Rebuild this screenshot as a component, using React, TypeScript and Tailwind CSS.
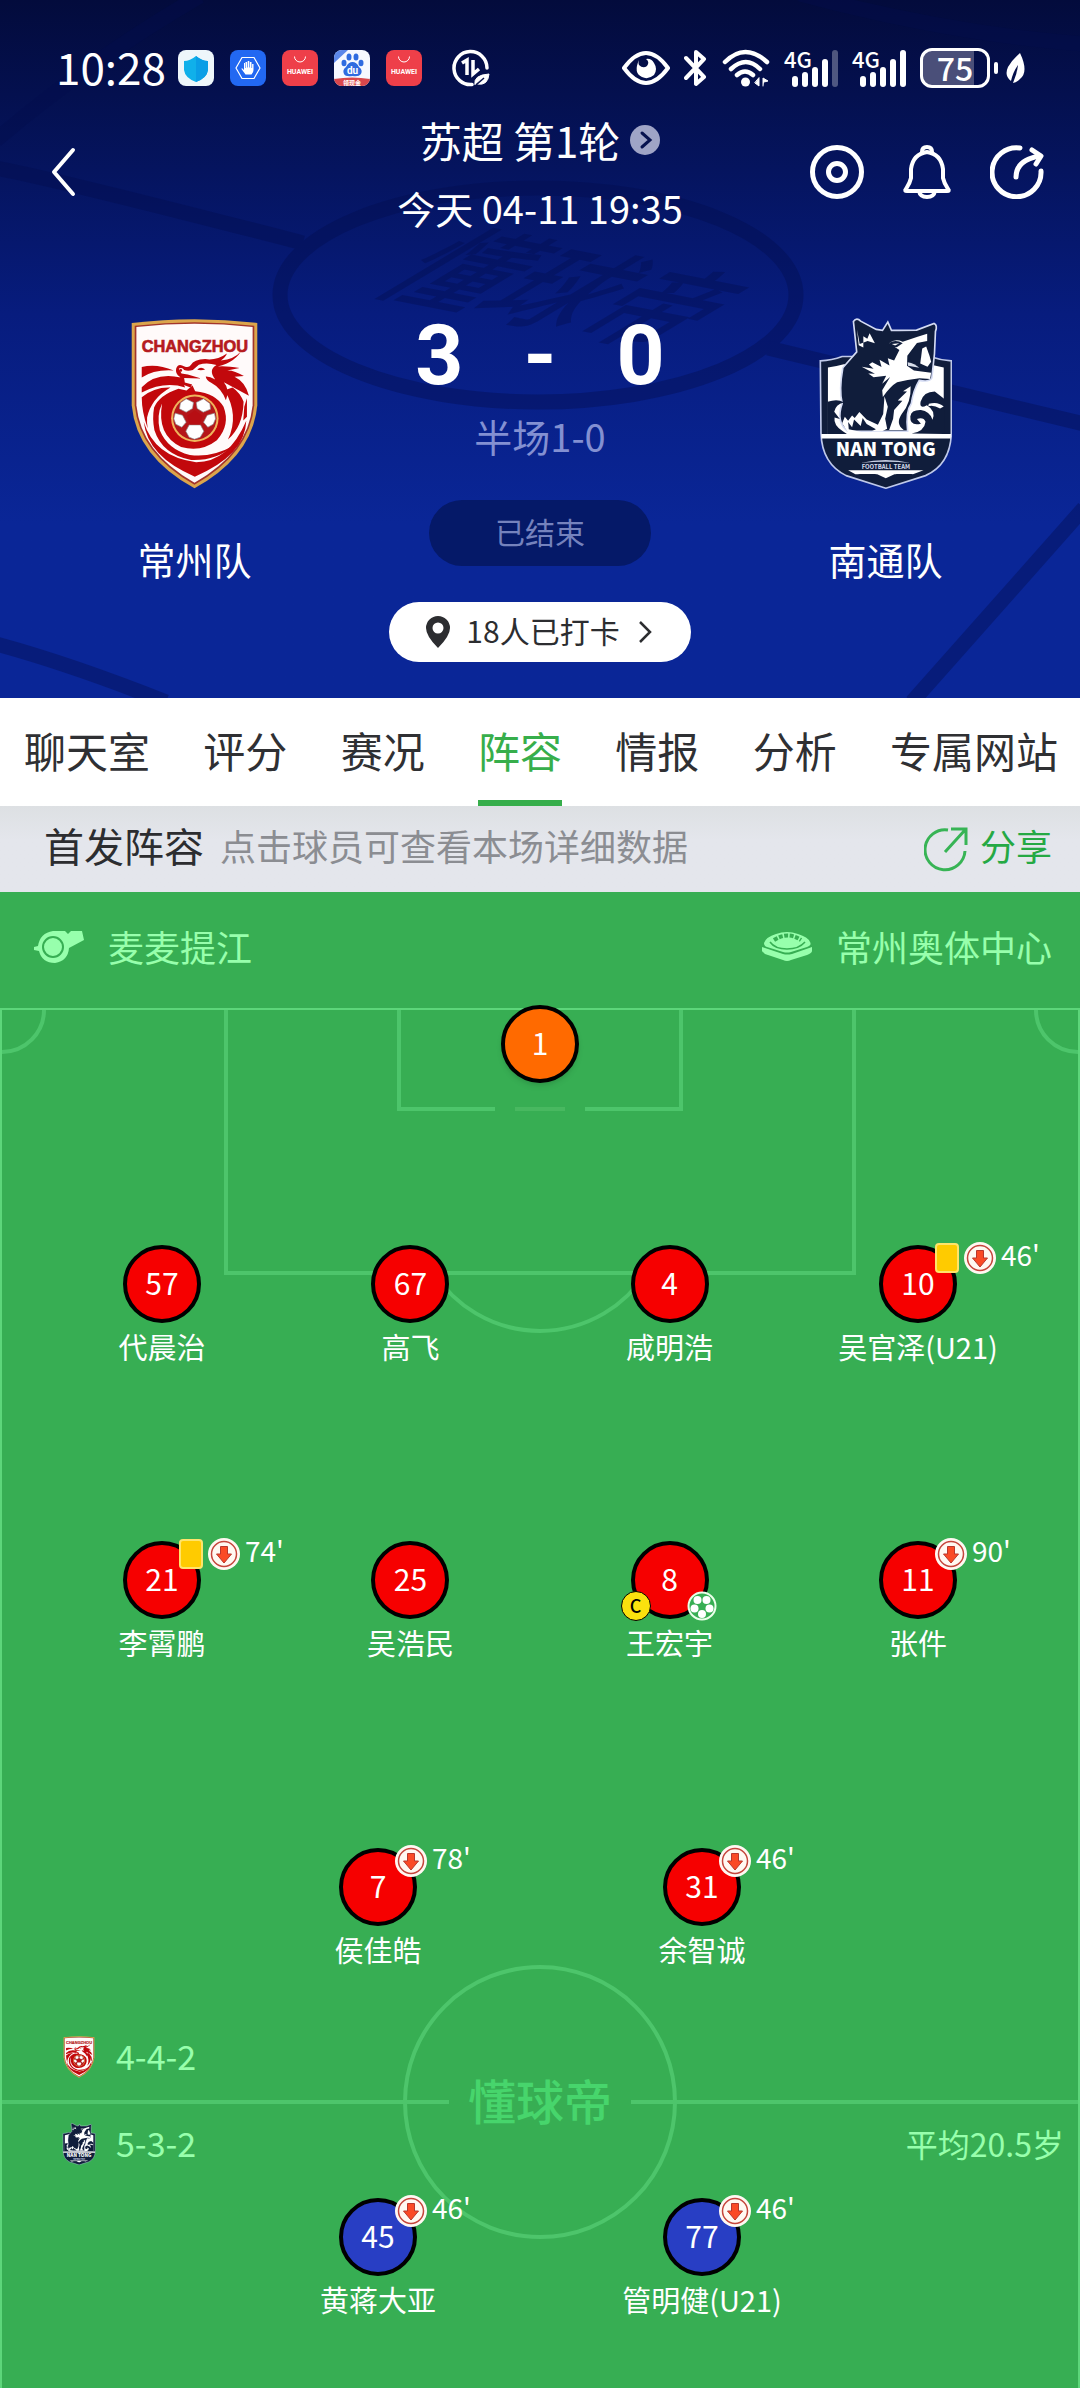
import { clsx } from "clsx";

interface ICrest {
  className?: string;
}

interface IPlayer {
  number: number;
  name?: string;
  team: "keeper" | "home" | "away";
  off?: string;
  booked?: boolean;
  captain?: boolean;
  scored?: boolean;
}

const tabs = ["聊天室", "评分", "赛况", "阵容", "情报", "分析", "专属网站"];

const keeper: IPlayer[] = [{ number: 1, team: "keeper" }];

const defenders: IPlayer[] = [
  { number: 57, name: "代晨治", team: "home" },
  { number: 67, name: "高飞", team: "home" },
  { number: 4, name: "咸明浩", team: "home" },
  { number: 10, name: "吴官泽(U21)", team: "home", booked: true, off: "46'" },
];

const midfielders: IPlayer[] = [
  { number: 21, name: "李霄鹏", team: "home", booked: true, off: "74'" },
  { number: 25, name: "吴浩民", team: "home" },
  { number: 8, name: "王宏宇", team: "home", captain: true, scored: true },
  { number: 11, name: "张件", team: "home", off: "90'" },
];

const forwards: IPlayer[] = [
  { number: 7, name: "侯佳皓", team: "home", off: "78'" },
  { number: 31, name: "余智诚", team: "home", off: "46'" },
];

const awayForwards: IPlayer[] = [
  { number: 45, name: "黄蒋大亚", team: "away", off: "46'" },
  { number: 77, name: "管明健(U21)", team: "away", off: "46'" },
];

const ChangzhouCrest = ({ className }: ICrest) => (
  <svg viewBox="120 84 380 512" className={className} role="img" aria-label="常州队">
    <path d="M122 99Q310 76 498 99V345Q484 498 310 594Q136 498 122 345Z" fill="#dba54c" />
    <path d="M131 107Q310 86 489 107V345Q475 490 310 583Q145 490 131 345Z" fill="#a3342b" />
    <path d="M136 111Q310 91 484 111V345Q470 486 310 577Q150 486 136 345Z" fill="#fffafa" />
    <text
      x="311"
      y="186"
      textAnchor="middle"
      fontSize="49"
      fontWeight="700"
      fontFamily="'Liberation Sans', sans-serif"
      fill="#b51b20"
      stroke="#b51b20"
      strokeWidth="2"
    >
      CHANGZHOU
    </text>
    <g fill="#c2080c">
      <path d="M152 231Q195 219 248 241Q190 237 152 262Z" />
      <path d="M152 291Q195 245 269 262L282 292Q220 272 152 307Z" />
      <path d="M152 321Q190 290 238 292Q180 325 168 382Q167 400 170 415Q152 365 152 321Z" />
      <path d="M189 352Q205 315 262 296L286 301L304 286L312 303Q375 310 397 350Q418 405 377 450Q330 487 270 470Q196 435 213 340Q196 375 206 420Q230 478 296 494Q360 503 424 468Q375 512 300 509Q214 493 190 420Q183 385 189 352Z" />
      <path d="M158 395Q190 500 315 516Q412 516 465 392Q462 495 311 559Q170 500 158 395Z" />
      <path d="M400 300Q445 375 410 448Q455 410 457 335Q447 308 424 292Z" />
      <path d="M459 350L467 324L467 380L456 391Z" />
      <path d="M360 278Q390 294 404 330Q417 299 398 276L473 317Q463 276 430 260L458 258Q429 240 408 241L445 234Q390 224 365 232Q425 222 449 184Q429 207 389 211Q404 200 407 190Q376 212 342 207Q308 208 299 225Q293 234 280 229Q260 217 255 236Q252 252 266 260L276 284L298 292L303 283L281 277L279 264L326 265L330 257L305 255Q330 246 335 226L351 231Q331 264 360 278Z" />
    </g>
    <path d="M263 235Q274 230 279 240Q290 244 305 240L323 224Q347 216 376 225Q350 240 372 268Q344 252 330 265L290 253L271 250Z" fill="#fffafa" />
    <path d="M318 239Q328 228 342 238Q331 242 318 239Z" fill="#c2080c" />
    <circle cx="269" cy="241" r="4" fill="#c2080c" />
    <circle cx="311" cy="384" r="71" fill="#efb45c" />
    <circle cx="311" cy="384" r="65" fill="#b5161a" />
    <g fill="#fff" stroke="#8e8b8b" strokeWidth="2">
      <path d="M285 326L307 337L304 355L285 366L265 356L268 338Z" />
      <path d="M337 326L356 340L358 357L336 366L318 355L315 337Z" />
      <path d="M252 369L274 375L285 396L272 411L254 402L248 386Z" />
      <path d="M370 369L348 375L337 396L350 411L366 402L373 386Z" />
      <path d="M294 404H328L338 423L327 441L310 447L294 441L284 423Z" />
    </g>
    <path d="M311 360L334 377L326 403H296L288 377Z" fill="#b70e13" />
  </svg>
);

const NantongCrest = ({ className }: ICrest) => (
  <svg viewBox="118 82 402 516" className={className} role="img" aria-label="南通队">
    <path d="M122 211Q157 210 188 198H453Q484 209 518 211V430Q515 524 440 558L320 596L200 558Q127 522 124 430Z" fill="#101d3b" stroke="#bfc9ea" strokeWidth="5" />
    <path d="M145 231Q173 227 193 221H452Q475 227 495 231V432H145Z" fill="#fff" />
    <path d="M222 92Q232 78 244 91L291 116L310 119L326 94L337 119Q385 118 413 118L466 98Q477 103 470 122L467 190L459 263Q453 276 421 270Q403 300 397 340Q379 365 386 424H205Q168 396 188 340Q178 300 190 232L232 184Z" fill="#101d3b" stroke="#d4dbf3" strokeWidth="5" />
    <path d="M233 116L241 160L265 151L287 158L271 128L264 144L252 137L252 171L238 164Z" fill="#fff" />
    <path d="M330 158Q347 143 371 153L416 138L445 129V151L414 157L385 196L384 226L405 240L457 247L454 266L422 264Q384 269 354 276Q335 287 311 320L309 300L333 260L309 280L321 256L283 261L267 249L287 250L247 229L283 235L269 222L279 215L307 230L301 208L331 225L326 203L345 210L361 178Z" fill="#fff" />
    <path d="M330 157Q350 145 371 158L353 170L333 168Z" fill="#101d3b" />
    <path d="M338 160L361 158L348 165Z" fill="#fff" />
    <path d="M411 165L439 157L460 163L450 181L443 165L430 207L424 223L390 207L388 222L414 233L455 241L452 221L438 231L441 207L455 219L459 196L431 183L421 220L395 208Q389 187 411 165Z" fill="#101d3b" />
    <path d="M430 174L442 168L452 196L457 214L446 229L424 219Z" fill="#fff" />
    <path d="M386 215Q408 219 421 232L387 226Z" fill="#d7ddea" />
    <path d="M395 288L372 303L384 304L356 331L370 332L345 360L342 386L330 420H374Q348 402 368 372Q397 338 395 288Z" fill="#fff" />
    <path d="M316 318L326 350L318 386L324 416L309 424H277L290 418L262 402L250 384L244 408L224 388L218 412L206 396L208 418L246 426H205L188 400L196 380L206 392L218 376L226 384L240 366L262 388L296 404L312 372Z" fill="#fff" />
    <path d="M144 335Q175 325 193 337Q168 343 164 365L181 387L165 382Q161 405 190 424L207 435H145Z" fill="#101d3b" />
    <path d="M398 431Q437 424 440 395Q434 380 414 387L426 401Q392 409 394 379Q397 359 426 360Q452 363 461 389Q472 362 444 345Q421 358 425 335Q434 304 468 304L496 326V432Z" fill="#101d3b" />
    <path d="M450 341Q477 333 495 349L484 355Q464 343 448 348Z" fill="#fff" />
    <path d="M125 432H517L516 446H125Z" fill="#fff" />
    <text x="320" y="499" textAnchor="middle" fontSize="57" fontWeight="900" fontFamily="'Noto Sans CJK SC', sans-serif" fill="#fff">
      NAN TONG
    </text>
    <path d="M244 520Q320 502 394 520Q320 512 244 520Z" fill="#c6cee2" />
    <text x="320" y="537" textAnchor="middle" fontSize="18" fontWeight="700" fontFamily="'Noto Sans CJK SC', sans-serif" fill="#d9dfee">
      FOOTBALL TEAM
    </text>
    <path d="M206 542H434L398 555L346 554L320 566L294 554H228Z" fill="#fff" />
    <path d="M235 553L320 590L405 553H353L320 573L287 553Z" fill="#101d3b" />
  </svg>
);

const StatusApp = ({ className, children }: { className: string; children: React.ReactNode }) => (
  <svg viewBox="0 0 36 36" className={clsx("h-9 w-9 rounded-lg", className)} aria-hidden="true">
    {children}
  </svg>
);

const HuaweiApp = () => (
  <StatusApp className="bg-[#ee3f49]">
    <path d="M12.500 6.500a5.500 5.500 0 0 0 11 0" fill="none" stroke="#fff" strokeWidth="1" />
    <text x="18" y="24" textAnchor="middle" fontSize="7" fontWeight="700" fontFamily="Roboto, sans-serif" fill="#fff">
      HUAWEI
    </text>
  </StatusApp>
);

const Signal = ({ weak }: { weak?: boolean }) => (
  <svg viewBox="0 0 54 40" className="h-10 w-[54px] overflow-visible" role="img" aria-label="4G">
    <text x="0" y="20" fontSize="22" fontWeight="500" fontFamily="'Noto Sans CJK SC', sans-serif" fill="#fff">
      4G
    </text>
    <g fill="#fff">
      <rect x="8" y="28" width="6" height="11" rx="3" />
      <rect x="18" y="24" width="6" height="15" rx="3" />
      <rect x="28" y="19" width="6" height="20" rx="3" />
      <rect x="38" y="11" width="6" height="28" rx="3" />
      <rect x="48" y="2" width="6" height="37" rx="3" opacity={weak ? 0.3 : 1} />
    </g>
  </svg>
);

const StatusBar = () => (
  <div className="flex h-11 items-center justify-between pr-[54px] pl-14">
    <div className="flex items-center gap-4">
      <span className="-mr-1 pb-1 text-[44px] leading-[44px]">10:28</span>
      <StatusApp className="bg-[#eef6fa]">
        <path d="M18 6q6 5 12 5v9q-1 8-12 12Q7 28 6 20v-9q6 0 12-5Z" fill="#10b0ea" />
        <path d="M18 6q6 5 12 5v9q-1 8-12 12Z" fill="#0a9ee6" />
      </StatusApp>
      <StatusApp className="bg-[#2268f2]">
        <path d="M12 7.500h12L30 18l-6 10.500H12L6 18Z" fill="none" stroke="#fff" strokeWidth="1.200" />
        <path d="M14 13v7l-1.500-1.500q-1-.5-1 .6l4 5.400h6q2-2 2-4.500v-6h-1.400v4h-.6v-6h-1.600v5.500h-.6V11h-1.600v6.500h-.6V12h-1.600v6h-.5v-5Z" fill="#fff" />
      </StatusApp>
      <HuaweiApp />
      <StatusApp className="bg-[#f6f8ff]">
        <path d="M0 0h14L0 13Z" fill="#5b87ea" />
        <g fill="#2f6be0">
          <ellipse cx="10" cy="13" rx="2.500" ry="3.200" />
          <ellipse cx="15" cy="7" rx="2.500" ry="3.500" />
          <ellipse cx="22" cy="7" rx="2.500" ry="3.500" />
          <ellipse cx="27" cy="13" rx="2.500" ry="3.200" />
          <path d="M18.500 12q4 0 6.500 5 4 3 2 7-2 3-8.500 2-7 1-8.500-2-2-4 2-7 2.500-5 6.500-5Z" />
        </g>
        <text x="18.500" y="24" textAnchor="middle" fontSize="10" fontWeight="700" fontFamily="Roboto, sans-serif" fill="#fff">
          du
        </text>
        <path d="M0 29q18-3 36 0v7H0Z" fill="#d8474c" />
        <text x="18" y="35" textAnchor="middle" fontSize="6" fontWeight="700" fontFamily="'Noto Sans CJK SC', sans-serif" fill="#fff">
          领现金
        </text>
      </StatusApp>
      <HuaweiApp />
      <svg viewBox="0 0 38 38" className="ml-3.5 h-[38px] w-[38px]" fill="none" stroke="#fff" aria-hidden="true">
        <path d="M20 35.500A16.500 16.500 0 1 1 35 19" strokeWidth="3.500" strokeLinecap="round" />
        <path d="M10 14l5-3v15M21 11v14l6-5" strokeWidth="3.500" />
        <path d="M23 36q-2-10 14-11-1 12-12 10l6-6" fill="#fff" strokeWidth="1" />
        <path d="M24 36l8-7" stroke="#050f48" strokeWidth="1.500" />
      </svg>
    </div>
    <div className="flex items-center gap-[14px]">
      <svg viewBox="0 0 48 34" className="h-[34px] w-12" aria-hidden="true">
        <path d="M2 17Q24-13 46 17Q24 47 2 17Z" fill="none" stroke="#fff" strokeWidth="4" strokeLinejoin="round" />
        <path d="M17 9q-6 13 3 17 6 3 12-2 4-6 0-12-3-5-8-4 4 3 1 7-4 3-8-1-1-2 0-5Z" fill="#fff" />
      </svg>
      <svg viewBox="0 0 24 38" className="h-[38px] w-6" fill="none" stroke="#fff" strokeWidth="4" strokeLinecap="round" strokeLinejoin="round" aria-hidden="true">
        <path d="M2 9l18 19-8 7V3l8 7L2 29" />
      </svg>
      <svg viewBox="0 0 48 38" className="h-[38px] w-12" fill="none" stroke="#fff" strokeWidth="4.500" strokeLinecap="round" aria-hidden="true">
        <path d="M3 13q20-20 42 0M9 20q15-14 29 0M15 26q8-7 16 0" />
        <circle cx="23.500" cy="33" r="4.500" fill="#fff" stroke="none" />
        <path d="M37 29v8l-4-3ZM41 37v-8l5 3-4 1" fill="#fff" strokeWidth="1" />
      </svg>
      <Signal weak />
      <Signal />
      <div className="flex items-center gap-1">
        <div className="h-10 w-[70px] rounded-xl border-3 border-white bg-linear-to-r from-[#4a4f79] from-80% to-transparent to-80% pb-1 text-center text-[32px] leading-[32px] font-medium">
          75
        </div>
        <div className="h-3 w-1 rounded-full bg-white" />
        <svg viewBox="0 0 20 32" className="ml-1 h-8 w-5" aria-hidden="true">
          <path d="M14 1q9 19 0 26-3 3-7 4Q11 22 12 13 7 20 5 29-2 24 2 15 6 8 14 1Z" fill="#fff" />
        </svg>
      </div>
    </div>
  </div>
);

// pitch seen in perspective behind the scoreboard
const HeaderBackdrop = () => (
  <svg
    viewBox="0 0 1080 698"
    preserveAspectRatio="xMidYMid slice"
    className="absolute inset-0 h-full w-full"
    fill="none"
    stroke="#030d4d"
    strokeWidth="15"
    opacity="0.38"
    aria-hidden="true"
  >
    <ellipse cx="538" cy="295" rx="258" ry="107" />
    <path d="M-4 168Q60 180 303 243M768 348L1084 424M-4 140Q90 60 200-4M800-6Q950 34 1084 44M1084 508L912 702M-4 644Q70 664 166 702" />
    <text
      x="0"
      y="0"
      textAnchor="middle"
      transform="translate(516 318) rotate(11) skewX(-48)"
      fontSize="100"
      fontWeight="500"
      fontFamily="'Noto Sans CJK SC', sans-serif"
      fill="#030d4d"
      stroke="none"
    >
      懂球帝
    </text>
  </svg>
);

const Team = ({ name, children }: { name: string; children: React.ReactNode }) => (
  <div className="flex flex-col items-center gap-[42px] pt-[82px]">
    {children}
    <span className="text-[38px] leading-[56px]">{name}</span>
  </div>
);

const MatchHeader = () => (
  <header className="relative bg-linear-to-b from-[#030b3c] via-[#071c7e] via-45% to-[#0a2697] to-75% pt-[46px] pb-9 text-white">
    <HeaderBackdrop />
    <div className="relative">
      <StatusBar />
      <div className="mt-[22px] grid grid-cols-[1fr_auto_1fr] items-start">
        <button type="button" aria-label="返回" className="flex h-[120px] w-32 items-center pl-[50px]">
          <svg viewBox="0 0 26 50" className="h-[50px] w-[26px]" fill="none" stroke="#fff" strokeWidth="4" strokeLinecap="round" strokeLinejoin="round">
            <path d="M23 3L4 25l19 22" />
          </svg>
        </button>
        <div className="flex flex-col items-center gap-3">
          <button type="button" className="flex items-center gap-[10px]">
            <span className="text-[42px] leading-[56px]">苏超 第1轮</span>
            <svg viewBox="0 0 30 30" className="h-[30px] w-[30px]" aria-hidden="true">
              <circle cx="15" cy="15" r="15" fill="#9fa4c6" />
              <path d="M12 8l8 7-8 7" fill="none" stroke="#07124f" strokeWidth="3" strokeLinecap="round" />
            </svg>
          </button>
          <p className="text-[38px] leading-[56px]">今天 04-11 19:35</p>
        </div>
        <div className="flex h-[120px] items-center justify-end gap-9 pr-9">
          <button type="button" aria-label="直播">
            <svg viewBox="0 0 54 54" className="h-[54px] w-[54px]" fill="none" stroke="#fff" strokeWidth="5">
              <circle cx="27" cy="27" r="24.500" />
              <circle cx="27" cy="27" r="8.500" />
            </svg>
          </button>
          <button type="button" aria-label="提醒">
            <svg viewBox="0 0 54 54" className="h-[54px] w-[54px]" fill="none" stroke="#fff" strokeWidth="4" strokeLinejoin="round">
              <path d="M6 44q4-6 5-11V24q2-15 16-17 14 2 16 17v9q1 5 5 11 2 2-1 2H7q-3 0-1-2Z" />
              <path d="M22 7q0-5 5-5t5 5M19 46q1 6 8 6t8-6" />
            </svg>
          </button>
          <button type="button" aria-label="转发">
            <svg viewBox="0 0 54 54" className="h-[54px] w-[54px]" fill="none" stroke="#fff" strokeWidth="5" strokeLinecap="round" strokeLinejoin="round">
              <path d="M30 3A24.500 24.500 0 1 0 51 26" />
              <path d="M26 32q0-17 24-21" />
              <path d="M42 5l9 6-5 8" />
            </svg>
          </button>
        </div>
      </div>

      <div className="grid grid-cols-[1fr_auto_1fr] items-start">
        <Team name="常州队">
          <ChangzhouCrest className="h-[171px] w-[127px]" />
        </Team>
        <div className="flex flex-col items-center pt-[78px]">
          <div className="grid w-full grid-cols-3 text-center font-['Roboto',sans-serif] text-[84px] leading-[84px] font-bold">
            <span>3</span>
            <span>-</span>
            <span>0</span>
          </div>
          <p className="mt-[14px] text-[38px] leading-[48px] text-[#8390d2]">半场1-0</p>
          <div className="mt-10 flex h-[66px] w-[222px] items-center justify-center rounded-full bg-[#051968] pb-1 text-[30px] leading-[44px] text-[#7582bd]">
            已结束
          </div>
          <button
            type="button"
            className="mt-9 flex h-[60px] w-[302px] items-center justify-center gap-4 rounded-full bg-white text-[30px] text-[#2c2d30]"
          >
            <svg viewBox="0 0 24 32" className="h-8 w-6" aria-hidden="true">
              <path d="M12 0a12 12 0 0 1 12 12q0 8-12 20Q0 20 0 12A12 12 0 0 1 12 0Zm0 6.500a5.500 5.500 0 1 0 0 11 5.500 5.500 0 0 0 0-11Z" fill="#2c2d30" />
            </svg>
            <span className="pb-1 leading-[44px]">18人已打卡</span>
            <svg viewBox="0 0 18 24" className="h-6 w-[18px]" fill="none" stroke="#2c2d30" strokeWidth="2.500" aria-hidden="true">
              <path d="M4 2l10 10L4 22" />
            </svg>
          </button>
        </div>
        <Team name="南通队">
          <NantongCrest className="h-[171px] w-[133px]" />
        </Team>
      </div>
    </div>
  </header>
);

const Marker = ({ player }: { player: IPlayer }) => {
  const { number, name, team, off, booked, captain, scored } = player;
  return (
    <div className="flex flex-col items-center gap-[3px] text-white">
      <button
        type="button"
        className={clsx(
          "relative h-[78px] w-[78px] rounded-full border-4 border-black text-[30px]",
          team === "keeper" && "bg-[#ff6a00] shadow-md",
          team === "home" && "bg-[#f60000]",
          team === "away" && "bg-[#283ec4]"
        )}
      >
        <span className="block pb-1">{number}</span>
        {off && (
          <span className="absolute -top-[9px] left-[52px] flex items-center gap-[5px]">
            {booked && <span className="h-[30px] w-6 rounded-sm border-2 border-[#ffe46b] bg-[#ffcb00]" />}
            <svg viewBox="0 0 32 32" className="h-8 w-8" aria-hidden="true">
              <circle cx="16" cy="16" r="16" fill="#fff8f2" />
              <circle cx="16" cy="16" r="12.500" fill="none" stroke="#c5453c" strokeWidth="1.500" />
              <path d="M12.500 8.500h7V16h4L16 25l-7.500-9h4Z" fill="#fa4a26" stroke="#b9362c" strokeWidth="1" />
            </svg>
            <span className="pb-2 text-[28px] leading-[28px]">{off}</span>
          </span>
        )}
        {captain && (
          <span className="absolute top-[46px] -left-[14px] flex h-[30px] w-[30px] items-center justify-center rounded-full border border-black bg-[#fbe10e] pb-0.5 text-lg leading-5 font-medium text-black">
            C
          </span>
        )}
        {scored && (
          <svg viewBox="0 0 30 30" className="absolute top-[46px] left-[52px] h-[30px] w-[30px]" aria-hidden="true">
            <circle cx="15" cy="15" r="13.500" fill="#37ae53" stroke="#eaffea" strokeWidth="2" />
            <g fill="#fff">
              <circle cx="10.500" cy="9" r="4" />
              <circle cx="19.500" cy="9" r="4" />
              <circle cx="7.500" cy="17.500" r="4" />
              <circle cx="22.500" cy="17.500" r="4" />
              <circle cx="15" cy="23" r="4" />
            </g>
          </svg>
        )}
      </button>
      {name && <span className="text-[29px] leading-10 whitespace-nowrap">{name}</span>}
    </div>
  );
};

const Line = ({ className, players }: { className: string; players: IPlayer[] }) => (
  <div className={clsx("grid", className)}>
    {players.map((player) => (
      <Marker key={player.number} player={player} />
    ))}
  </div>
);

const PitchMarkings = () => (
  <svg
    viewBox="0 0 1080 1380"
    preserveAspectRatio="xMidYMin slice"
    className="absolute inset-0 h-full w-full"
    fill="none"
    stroke="#4dc56b"
    strokeWidth="4"
    aria-hidden="true"
  >
    <path d="M1 1380V1H1079V1380" stroke="#5dd67a" strokeWidth="2" />
    <path d="M2 44A42 42 0 0 0 44 2M1078 44A42 42 0 0 1 1036 2" />
    <path d="M226 2V265H854V2" />
    <path d="M399 2V101H495M585 101H681V2" />
    <path d="M515 101h50" stroke="#48b860" />
    <path d="M434 265A126 126 0 0 0 646 265" />
    <circle cx="540" cy="1094" r="135" />
    <path d="M2 1094H449M631 1094H1078" />
    <text
      x="540"
      y="1112"
      textAnchor="middle"
      fontSize="48"
      fontWeight="500"
      fontFamily="'Noto Sans CJK SC', sans-serif"
      fill="#47d56c"
      stroke="none"
    >
      懂球帝
    </text>
  </svg>
);

export default function App() {
  return (
    <div className="w-full bg-[#37ae53] font-['Noto_Sans_CJK_SC','Noto_Sans',sans-serif]">
      <MatchHeader />

      <nav className="flex h-[108px] justify-between bg-white pr-[22px] pl-6 text-[42px] leading-[60px] text-[#2f3033]">
        {tabs.map((tab) => (
          <a
            key={tab}
            href="#lineup"
            className={clsx(
              "border-b-6 pt-[22px]",
              tab === "阵容" ? "border-[#37ae4b] text-[#37ae4b]" : "border-transparent"
            )}
          >
            {tab}
          </a>
        ))}
      </nav>

      <section id="lineup">
        <div className="flex h-[86px] items-center justify-between bg-linear-to-b from-[#dde0e3] to-[#e4e6ec] to-40% pr-7 pb-2 pl-11">
          <div className="flex items-center gap-4">
            <h2 className="text-[40px] leading-[56px] text-[#2c2d30]">首发阵容</h2>
            <p className="text-4xl leading-[56px] text-[#8b8d92]">点击球员可查看本场详细数据</p>
          </div>
          <button type="button" className="flex items-center gap-3 text-4xl leading-[56px] text-[#25a944]">
            <svg viewBox="0 0 44 46" className="mt-2 h-[46px] w-11" fill="none" stroke="#37b455" strokeWidth="3" aria-hidden="true">
              <path d="M24 4A20 20 0 1 0 41 25" />
              <path d="M21 26L41 4M27 3h15v16" />
            </svg>
            分享
          </button>
        </div>

        <div className="flex h-[116px] items-center justify-between px-7 pb-2 text-4xl leading-[52px] text-[#97ffac]">
          <div className="flex items-center gap-6 pl-1.5">
            <svg viewBox="0 0 50 34" className="h-[34px] w-[50px]" aria-hidden="true">
              <path d="M19 2h12l3 3 3-3h11l2 9-15 8q-1 13-14 15Q8 34 5 22l-5-1v-3l4-1Q6 4 19 2Z" fill="#97ffac" />
              <circle cx="19" cy="18" r="10" fill="#97ffac" stroke="#37ae53" strokeWidth="2" />
            </svg>
            <span>麦麦提江</span>
          </div>
          <div className="flex items-center gap-6">
            <svg viewBox="0 0 50 30" className="h-[30px] w-[50px]" aria-hidden="true">
              <path d="M0 16v4q2 3 6 4l15 5q4 2 8 0l16-5q5-2 5-4v-4l-20 7q-5 1-9 0Z" fill="#97ffac" />
              <path d="M2 12q2-6 12-9 11-4 22 0 10 3 12 8 2 3-3 5l-16 5q-4 1-8 0L5 16q-3-1-3-4Z" fill="#97ffac" />
              <path d="M8 11q5 7 17 7t18-7" fill="none" stroke="#37ae53" strokeWidth="1.500" />
              <path d="M12 9q14-9 27 0" fill="none" stroke="#37ae53" strokeWidth="4" strokeDasharray="4 1.500" />
            </svg>
            <span>常州奥体中心</span>
          </div>
        </div>

        <div className="relative flow-root pb-[69px]">
          <PitchMarkings />
          <div className="relative -mt-[3px]">
            <Line className="grid-cols-1" players={keeper} />
            <Line className="mt-[162px] grid-cols-[22fr_24fr_24fr_22fr] px-[4%]" players={defenders} />
            <Line className="mt-[175px] grid-cols-[22fr_24fr_24fr_22fr] px-[4%]" players={midfielders} />
            <Line className="mt-[186px] grid-cols-2 px-[20%]" players={forwards} />

            <div className="mt-[66px] flex flex-col gap-[43px] pr-4 pl-[62px] leading-[44px] text-[#97ffac]">
              <div className="flex items-center gap-5">
                <ChangzhouCrest className="h-[42px] w-[34px]" />
                <span className="pb-0.5 text-[34px] leading-[42px]">4-4-2</span>
              </div>
              <div className="flex items-center gap-5">
                <NantongCrest className="h-[42px] w-[34px]" />
                <span className="pb-0.5 text-[34px] leading-[42px]">5-3-2</span>
                <span className="ml-auto pb-0.5 text-[32px] leading-[42px]">平均20.5岁</span>
              </div>
            </div>

            <Line className="mt-8 grid-cols-2 px-[20%]" players={awayForwards} />
          </div>
        </div>
      </section>
    </div>
  );
}
